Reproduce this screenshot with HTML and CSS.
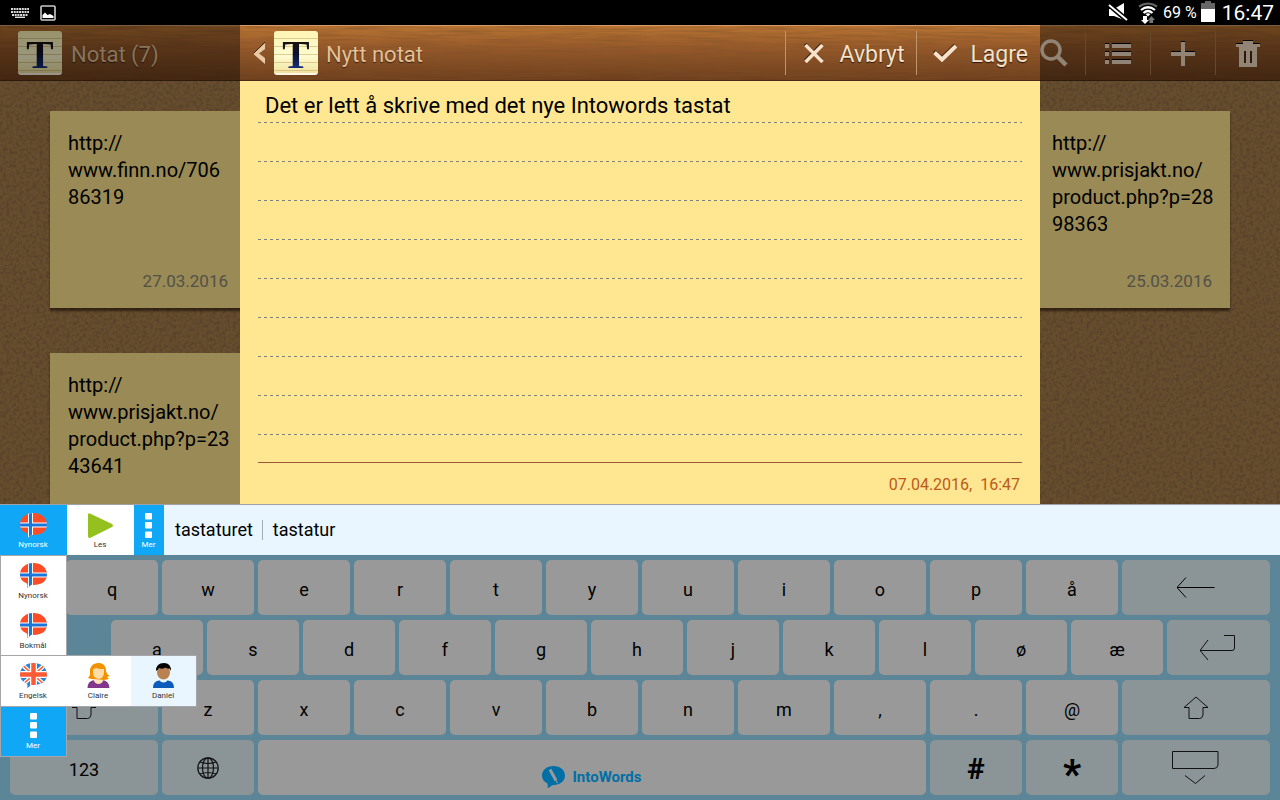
FILE: index.html
```html
<!DOCTYPE html>
<html lang="no">
<head>
<meta charset="utf-8">
<meta name="viewport" content="width=device-width, initial-scale=1">
<title>Nytt notat</title>
<link rel="stylesheet" href="styles.css">
</head>
<body>
<svg class="defs" width="0" height="0" aria-hidden="true">
  <defs>
    <filter id="grain-wood" x="0" y="0" width="100%" height="100%">
      <feTurbulence type="fractalNoise" baseFrequency="0.02 0.45" numOctaves="3" seed="12"/>
      <feColorMatrix values="0 0 0 0 0.2  0 0 0 0 0.08  0 0 0 0 0.02  1 0 0 0 -0.38"/>
    </filter>
    <filter id="grain-cork" x="0" y="0" width="100%" height="100%">
      <feTurbulence type="fractalNoise" baseFrequency="0.3" numOctaves="3" seed="9"/>
      <feColorMatrix values="0 0 0 0 0.2  0 0 0 0 0.1  0 0 0 0 0.05  1.3 0 0 0 -0.52"/>
    </filter>
    <clipPath id="bubble"><path d="M13.500 0C21 0 27 4.500 27 11.500S21 22 13.500 22Q12 22 11 21.800Q9 24.500 7 25Q8 22.500 7 20.500C3 19 0 16 0 11.500C0 4.500 6 0 13.500 0Z"/></clipPath>
    <symbol id="norway" viewBox="0 0 27 25">
      <g clip-path="url(#bubble)">
        <rect width="27" height="25" fill="#ff4b26"/>
        <path d="M10.500 0V25M0 12H27" stroke="#fff" stroke-width="5"/>
        <path d="M10.500 0V25M0 12H27" stroke="#1b76dc" stroke-width="3"/>
      </g>
    </symbol>
    <symbol id="britain" viewBox="0 0 27 25">
      <g clip-path="url(#bubble)">
        <rect width="27" height="25" fill="#2d83cf"/>
        <path d="M0 0L27 24M27 0L0 24" stroke="#fff" stroke-width="4"/>
        <path d="M0 0L27 24M27 0L0 24" stroke="#ff5a36" stroke-width="1.500"/>
        <path d="M13.500 0V25M0 11.500H27" stroke="#fff" stroke-width="7"/>
        <path d="M13.500 0V25M0 11.500H27" stroke="#ff5a36" stroke-width="4.500"/>
      </g>
    </symbol>
    <symbol id="more" viewBox="0 0 27 25">
      <g fill="#fff"><rect x="10" y="0" width="7" height="6.500" rx="1"/><rect x="10" y="9" width="7" height="6.500" rx="1"/><rect x="10" y="18.500" width="7" height="6.500" rx="1"/></g>
    </symbol>
    <symbol id="shift" viewBox="0 0 26 24">
      <path d="M13 1L1 11.500H6V22.500H16.500Q19.500 22.500 20 19V11.500H25Z" fill="none" stroke="#111" stroke-width="1"/>
    </symbol>
  </defs>
</svg>

<header class="status">
  <div class="status-side">
    <svg width="18" height="10" viewBox="0 0 18 10"><path d="M0 1H18M0 4H18M1 7H17" stroke="#ddd" stroke-width="2" stroke-dasharray="2 .7"/><path d="M4 9.300H14" stroke="#ddd" stroke-width="1.400"/></svg>
    <svg width="16" height="16" viewBox="0 0 16 16"><rect x="1" y="1" width="14" height="14" rx="1" fill="none" stroke="#ccc" stroke-width="1.600"/><path d="M2.500 13V10L5 7.500L7.500 10L10 9L13.500 11V13Z" fill="#fff"/></svg>
  </div>
  <div class="status-side status-info">
    <svg class="mute" width="21" height="20" viewBox="0 0 21 20"><path d="M1 6H6L16 0V17L6 13H1Z" fill="#fff"/><path d="M0 1L20 18" stroke="#000" stroke-width="5"/><path d="M1 2L19 17" stroke="#fff" stroke-width="2"/></svg>
    <svg class="wifi" width="20" height="22" viewBox="0 0 20 22" fill="none"><path d="M1 4.500Q10-1.500 19 4.500" stroke="#666" stroke-width="2.200"/><path d="M3 8Q10 2.500 17 8M5.500 11Q10 7 14.500 11" stroke="#fff" stroke-width="2.200"/><path d="M7.500 12Q10 10.500 12.500 12L10 14.500Z" fill="#fff"/><path d="M5 14H9V18H11L7 22L3 18H5Z" fill="#fff"/><path d="M11.500 21H15V18H17L13.500 14L10 18H11.500Z" fill="#777"/></svg>
    <span class="percent">69 %</span>
    <svg class="battery" width="14" height="21" viewBox="0 0 14 21"><path d="M4 0H10V2H14V8H0V2H4Z" fill="#666"/><rect y="8" width="14" height="13" fill="#fff"/></svg>
    <time class="clock">16:47</time>
  </div>
</header>

<main class="stage">
  <section class="board" aria-label="Notat">
    <svg class="texture"><rect width="100%" height="100%" filter="url(#grain-cork)"/></svg>
    <div class="woodbar">
      <svg class="texture"><rect width="100%" height="100%" filter="url(#grain-wood)"/></svg>
      <span class="app-icon"><span class="app-letter">T</span></span>
      <h1 class="bar-title">Notat (7)</h1>
      <div class="tools">
        <button class="tool" aria-label="Søk"><svg width="28" height="30" viewBox="1 0 28 30" fill="none" stroke="#f3ddc2"><circle cx="12" cy="12" r="9" stroke-width="3.500"/><path d="M18 18L27 27" stroke-width="4.500"/></svg></button>
        <button class="tool" aria-label="Liste"><svg width="26" height="21" viewBox="0 0 26 21" fill="#f3ddc2"><path d="M0 1H4V5H0ZM7 1H26V5H7ZM0 9H4V13H0ZM7 9H26V13H7ZM0 17H4V21H0ZM7 17H26V21H7Z"/><path d="M0 0H4V1H0ZM7 0H26V1H7ZM0 8H4V9H0ZM7 8H26V9H7ZM0 16H4V17H0ZM7 16H26V17H7Z" fill="#000"/></svg></button>
        <button class="tool" aria-label="Ny"><svg width="24" height="25" viewBox="0 0 24 25"><path d="M10 1H14V11H24V15H14V25H10V15H0V11H10Z" fill="#f3ddc2"/><path d="M10 0H14V1H10ZM0 10H10V11H0ZM14 10H24V11H14Z" fill="#000"/></svg></button>
        <button class="tool" aria-label="Slett"><svg width="24" height="27" viewBox="0 0 24 27"><path d="M7 1H17V4H24V7H21V27H3V7H0V4H7Z" fill="#f3ddc2"/><path d="M7 0H17V1H7ZM0 3H7V4H0ZM17 3H24V4H17Z" fill="#000"/><path d="M9 11V23M15 11V23" stroke="#4a2a14" stroke-width="2"/></svg></button>
      </div>
    </div>
    <div class="notes">
      <article class="note"><p>http://<br>www.finn.no/706<br>86319</p><time>27.03.2016</time></article>
      <article class="note note-last"><p>http://<br>www.prisjakt.no/<br>product.php?p=28<br>98363</p><time>25.03.2016</time></article>
      <article class="note"><p>http://<br>www.prisjakt.no/<br>product.php?p=23<br>43641</p></article>
    </div>
  </section>
  <div class="shade"></div>

  <section class="dialog" role="dialog" aria-label="Nytt notat">
    <div class="woodbar dialog-bar">
      <svg class="texture"><rect width="100%" height="100%" filter="url(#grain-wood)"/></svg>
      <button class="back" aria-label="Tilbake"><svg width="12" height="22" viewBox="0 0 12 22"><path d="M11 1V7L5 11.500L11 16V22L0 12.500V11Z" fill="#e9c9a3"/><path d="M11 0L0 11" stroke="#3c200e" stroke-width="1"/></svg></button>
      <span class="app-icon"><span class="app-letter">T</span></span>
      <h2 class="bar-title">Nytt notat</h2>
      <button class="action"><svg width="20" height="20" viewBox="0 0 20 20"><path d="M1 1L18 18M18 1L1 18" stroke="#3c200e" stroke-width="3.500"/><path d="M1.500 2L18.500 19M18.500 2L1.500 19" stroke="#f8e3ca" stroke-width="3.500"/></svg><span>Avbryt</span></button>
      <button class="action save"><svg width="24" height="18" viewBox="0 0 24 18" fill="none"><path d="M1 7.500L9 14.500L22.500 1" stroke="#3c200e" stroke-width="4"/><path d="M1.500 8.500L9 15.500L23 2" stroke="#f8e3ca" stroke-width="4"/></svg><span>Lagre</span></button>
    </div>
    <div class="paper">
      <textarea class="lines" rows="9" aria-label="Notattekst" spellcheck="false">Det er lett å skrive med det nye Intowords tastat</textarea>
      <time class="stamp">07.04.2016,&nbsp; 16:47</time>
    </div>
  </section>
</main>

<section class="keyboard" aria-label="Tastatur">
  <div class="suggest">
    <button class="tile blue"><svg><use href="#norway"/></svg>Nynorsk</button>
    <button class="tile"><svg viewBox="0 0 27 25"><path d="M1 2Q1-1 4 1L25 11Q27 12.500 25 14L4 24.500Q1 26 1 23Z" fill="#95c11f"/></svg>Les</button>
    <button class="tile blue narrow"><svg><use href="#more"/></svg>Mer</button>
    <button class="word">tastaturet</button>
    <button class="word">tastatur</button>
  </div>

  <div class="keys">
    <div class="row">
      <span class="indent-s"></span>
      <button class="key">q</button><button class="key">w</button><button class="key">e</button><button class="key">r</button><button class="key">t</button><button class="key">y</button><button class="key">u</button><button class="key">i</button><button class="key">o</button><button class="key">p</button><button class="key">å</button>
      <button class="key wide icon" aria-label="Slett tegn"><svg width="39" height="21" viewBox="0 0 39 21" fill="none" stroke="#000"><path d="M0 10.500H37.500M9 .5L0 10.500L9 20.500"/></svg></button>
    </div>
    <div class="row">
      <span class="indent-m"></span>
      <button class="key">a</button><button class="key">s</button><button class="key">d</button><button class="key">f</button><button class="key">g</button><button class="key">h</button><button class="key">j</button><button class="key">k</button><button class="key">l</button><button class="key">ø</button><button class="key">æ</button>
      <button class="key enter icon" aria-label="Linjeskift"><svg width="38" height="25" viewBox="1 0 38 25" fill="none" stroke="#111"><path d="M1 15.500H33Q35.500 15.500 35.500 13V.5H25M9 5L1 15.500L9 25"/></svg></button>
    </div>
    <div class="row">
      <button class="key wide icon" aria-label="Skift"><svg width="26" height="24"><use href="#shift"/></svg></button>
      <button class="key">z</button><button class="key">x</button><button class="key">c</button><button class="key">v</button><button class="key">b</button><button class="key">n</button><button class="key">m</button><button class="key">,</button><button class="key">.</button><button class="key">@</button>
      <button class="key wide icon" aria-label="Skift høyre"><svg width="26" height="24"><use href="#shift"/></svg></button>
    </div>
    <div class="row">
      <button class="key wide">123</button>
      <button class="key icon" aria-label="Språk"><svg width="22" height="22" viewBox="0 0 22 22" fill="none" stroke="#111" stroke-width="1.200"><circle cx="11" cy="11" r="10.200"/><ellipse cx="11" cy="11" rx="5.500" ry="10.200"/><path d="M11 1V21M1 11H21M3 5Q11 8 19 5M3 17Q11 14 19 17"/></svg></button>
      <button class="key space"><svg width="23" height="22" viewBox="0 0 23 22"><path d="M11.500 0C18 0 23 4 23 9.500S18 19 11.500 19Q9.500 19 8.500 20.500T5 21.500Q6.500 19.500 5.500 17.500C2 16 0 13 0 9.500C0 4 5 0 11.500 0Z" fill="#006fa6"/><path d="M8 3.500L14 14.500" stroke="#999" stroke-width="3"/><path d="M14 14.500L15.500 17" stroke="#999" stroke-width="1.200"/></svg>IntoWords</button>
      <button class="key strong">#</button>
      <button class="key strong star">*</button>
      <button class="key wide icon" aria-label="Skjul tastatur"><svg width="49" height="33" viewBox="0 0 49 33" fill="none" stroke="#111"><path d="M.5 .5H46V14Q45.500 17.500 42 17.500H.5ZM13 24.500L23.500 32.500L33 24.500"/></svg></button>
    </div>
  </div>

  <div class="menus">
    <div class="menu languages">
      <button class="tile"><svg><use href="#norway"/></svg>Nynorsk</button>
      <button class="tile"><svg><use href="#norway"/></svg>Bokmål</button>
    </div>
    <div class="menu voices">
      <button class="tile"><svg><use href="#britain"/></svg>Engelsk</button>
      <button class="tile"><svg viewBox="0 0 27 25"><path d="M6 16L3 15L5 12V6Q7 0 13 0H15Q21 1 21 8Q22 12 25 13L22 14L24 16L19 17Z" fill="#f39200"/><path d="M2.500 25Q2.500 18 9 17H18Q24 18 24.500 25Z" fill="#82368c"/><path d="M8.500 17H18.500Q17 21 13.500 21T8.500 17Z" fill="#ffe3b8"/><path d="M8 5H19V9Q19 15 14 16Q8 15 8 10Z" fill="#ffdca8"/><path d="M8 3H19V6Q12 6 11 4.500Q10 6 8 6Z" fill="#f39200"/></svg>Claire</button>
      <button class="tile picked"><svg viewBox="0 0 27 25"><path d="M3 25Q3 18 9 17.500H18Q24 18 24 25Z" fill="#0d5bba"/><path d="M9.500 17H17.500Q16.500 19.500 13.500 19.500T9.500 17Z" fill="#e9f6ff"/><ellipse cx="13.500" cy="9.500" rx="6.500" ry="7" fill="#b98250"/><path d="M6 8Q6 0 14 0Q21 0 21 8L19.500 5.500Q17 6 15.500 4.500Q13 6.500 9 5Q8 7 6 8Z" fill="#000"/></svg>Daniel</button>
    </div>
    <div class="menu extra">
      <button class="tile blue"><svg><use href="#more"/></svg>Mer</button>
    </div>
  </div>
</section>
</body>
</html>
```
FILE: styles.css
```css
* { box-sizing: border-box; }

body {
  margin: 0;
  min-height: 100vh;
  display: flex;
  flex-direction: column;
  background: #000;
  font-family: Roboto, "Noto Sans", sans-serif;
  overflow: hidden;
}

button {
  border: 0;
  margin: 0;
  padding: 0;
  background: none;
  color: inherit;
  font: inherit;
}

svg { display: block; flex: none; }
.defs { position: absolute; }

/* Status bar */
.status {
  height: 25px;
  padding: 0 6px 0 11px;
  display: flex;
  justify-content: space-between;
  color: #fff;
}
.status-side { display: flex; align-items: center; gap: 11px; }
.status-info { gap: 4px; }
.mute { margin-right: 5px; }
.wifi { margin-right: 1px; }
.percent { font-size: 16px; line-height: 24px; }
.battery { margin-right: 3px; margin-bottom: 3px; }
.clock { font-size: 21px; line-height: 24px; }

/* Stage */
.stage {
  position: relative;
  flex: 1 1 0;
  min-height: 320px;
  display: flex;
  justify-content: center;
  overflow: hidden;
}
.board {
  position: absolute;
  inset: 0;
  background: #aa814d;
}
.texture {
  position: absolute;
  inset: 0;
  width: 100%;
  height: 100%;
}
.shade {
  position: absolute;
  inset: 0;
  background: rgba(0, 0, 0, 0.4);
}

.woodbar {
  position: relative;
  height: 56px;
  padding-left: 18px;
  display: flex;
  align-items: center;
  border-top: 1px solid #d59a68;
  border-bottom: 1px solid #4d2a17;
  background: linear-gradient(#b87433, #96592a 40%, #6d3f1d);
}
.woodbar > :not(.texture) { position: relative; }

.app-icon {
  width: 44px;
  height: 44px;
  flex: none;
  display: flex;
  justify-content: center;
  border-radius: 3px;
  border-bottom: 2px solid #fff8e6;
  background:
    repeating-linear-gradient(transparent 0 7px, rgba(190, 160, 90, 0.5) 7px 8px),
    linear-gradient(#fff5b5, #fffbd0 60%, #f0e3a0);
}
.app-letter {
  padding-top: 2px;
  font: bold 41px/42px "Liberation Serif", serif;
  background: linear-gradient(#1a120c 25%, #0b1230 55%, #16307a 90%);
  -webkit-background-clip: text;
  background-clip: text;
  color: transparent;
}
.bar-title {
  margin: 0 0 0 9px;
  flex: 1;
  font-size: 22px;
  font-weight: 400;
  line-height: 28px;
  padding-top: 3px;
  color: #e4c197;
  text-shadow: 0 1px 1px #3c200e;
}
.tools { display: flex; height: 44px; }
.tool {
  width: 65px;
  display: flex;
  align-items: center;
  justify-content: center;
  border-left: 1px solid #a87a4c;
}
.tool:first-child { border-left: 0; padding-left: 2px; }

/* Notes on the board */
.notes {
  position: relative;
  padding: 30px 50px 0;
  display: grid;
  grid-template-columns: repeat(5, minmax(0, 1fr));
  gap: 45px 50px;
}
.note {
  height: 197px;
  padding: 19px 18px 17px;
  display: flex;
  flex-direction: column;
  justify-content: space-between;
  background: #ffe690;
  box-shadow: 0 3px 2px rgba(30, 15, 5, 0.6);
  grid-column: 1;
}
.note-last { grid-column: 5; grid-row: 1; }
.note p {
  margin: 0;
  font-size: 20px;
  line-height: 27px;
  white-space: nowrap;
  color: #000;
}
.note time {
  align-self: flex-end;
  font-size: 17px;
  line-height: 20px;
  color: #8b8678;
}

/* Dialog */
.dialog {
  position: relative;
  width: 62.5%;
  display: flex;
  flex-direction: column;
}
.dialog-bar { padding-left: 14px; }
.back { width: 20px; }
.dialog-bar .bar-title { margin-left: 8px; }
.action {
  height: 44px;
  padding: 0 12px 0 18px;
  display: flex;
  align-items: center;
  gap: 16px;
  border-left: 1px solid #c0946a;
  font-size: 23px;
  line-height: 28px;
  color: #f6e2ca;
  text-shadow: 0 1px 1px #2b1608;
}
.action span { padding-top: 3px; }
.save { padding-left: 16px; gap: 13px; }
.paper {
  flex: 1;
  padding: 3px 18px 0;
  display: flex;
  flex-direction: column;
  background: #ffe690;
}
.lines {
  width: 100%;
  height: 379px;
  padding: 2px 7px 0;
  border: 0;
  border-bottom: 1px solid #9c5a3c;
  outline: 0;
  resize: none;
  overflow: hidden;
  font: 22px/39px Roboto, "Noto Sans", sans-serif;
  color: #000;
  background:
    repeating-linear-gradient(90deg, transparent 0 3px, #ffe690 3px 6px),
    repeating-linear-gradient(transparent 0 38px, #7f7f86 38px 39px);
}
.stamp {
  align-self: flex-end;
  padding: 11px 2px 0 0;
  font-size: 16px;
  line-height: 22px;
  color: #bb5a1c;
}

/* Suggestions */
.keyboard {
  position: relative;
  background: #5c8597;
}
.suggest {
  height: 51px;
  display: flex;
  align-items: center;
  border-top: 1px solid #a0a0a6;
  background: #e9f6ff;
}
.tile {
  width: 65px;
  height: 50px;
  padding: 7px 1px 0 0;
  display: flex;
  flex-direction: column;
  align-items: center;
  gap: 3px;
  background: #fff;
  font-size: 8px;
  line-height: 10px;
  color: #333;
}
.tile svg { width: 27px; height: 25px; }
.blue { background: #10a8f6; color: #fff; }
.suggest .tile { width: 67px; padding-top: 8px; gap: 2px; }
.suggest .narrow { width: 30px; }
.word {
  padding: 0 9px 0 11px;
  font-size: 18px;
  line-height: 20px;
  color: #000;
}
.word + .word { border-left: 1px solid #a5abb0; padding-left: 10px; }

/* Keys */
.keys {
  padding: 5px 10px;
  display: flex;
  flex-direction: column;
  gap: 5px;
}
.row { display: flex; gap: 4px; height: 55px; }
.key {
  flex: 92 1 0;
  padding-top: 4px;
  display: flex;
  align-items: center;
  justify-content: center;
  border-radius: 5px;
  background: #999;
  font-size: 18px;
  color: #000;
}
.indent-s { flex: 52 1 0; }
.indent-m { flex: 97 1 0; }
.wide { flex-grow: 148; }
.enter { flex-grow: 103; }
.wide, .icon, .strong { background: #8b9497; }
.icon { padding: 0; }
.strong { padding-top: 2px; font-size: 30px; font-weight: 700; }
.star { padding-top: 14px; font-size: 40px; }
.space {
  flex-grow: 668;
  padding-top: 18px;
  gap: 7px;
  font-size: 15px;
  font-weight: 700;
  color: #006fa6;
}

/* Pop-up menus over the keys */
.menus {
  position: absolute;
  top: 51px;
  left: 0;
  display: flex;
  flex-direction: column;
  align-items: flex-start;
}
.menu {
  display: flex;
  border: 1px solid #a6a6aa;
  background: #fff;
}
.languages { flex-direction: column; border-bottom: 0; }
.voices { position: relative; z-index: 1; margin: -1px 0; }
.extra { border-top: 0; }
.picked { background: #e9f6ff; }
```
